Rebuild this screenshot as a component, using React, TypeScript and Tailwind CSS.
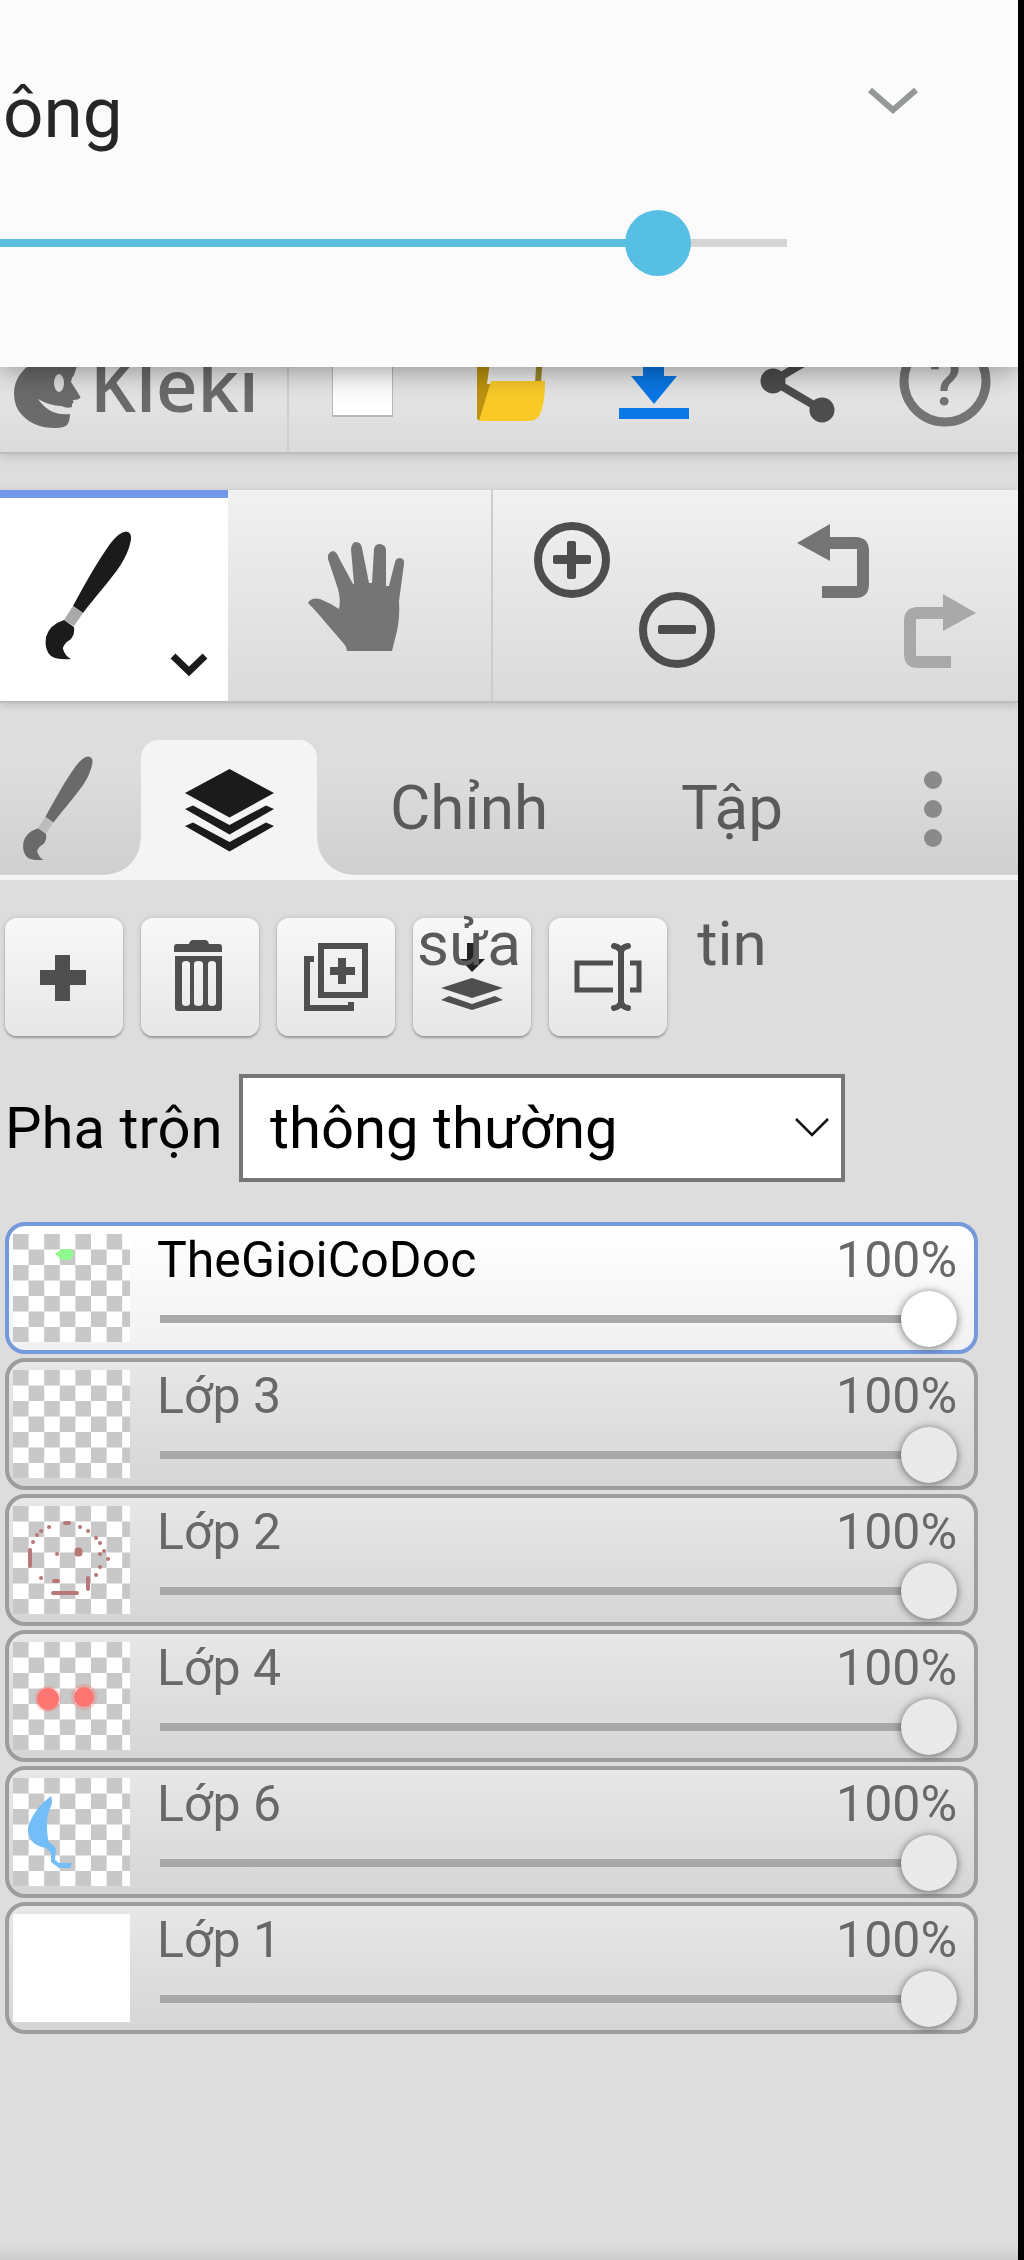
import React, { useState } from "react";

type IconProps = { className?: string };

function Brush({ className, ferrule }: { className: string; ferrule: string }) {
  return (
    <svg viewBox="0 0 90 130" className={className} fill="currentColor" aria-hidden="true">
      <path d="M30 76C42 54 54 32 67 14Q76 2 83 1.500Q89 2 88 10C86 20 82 28 77 36C66 52 52 67 40 83Z" />
      <path d="M30 76L40 83L31 96L21 90Z" fill={ferrule} />
      <path d="M21 90L31 97Q32 104 28 109Q20 114 20 119Q22 126 28 129Q14 130 8 126Q1 120 3 107Q6 95 21 90Z" />
    </svg>
  );
}

function KlekiLogo() {
  return (
    <svg viewBox="0 0 90 108" className="h-[108px] w-[90px] shrink-0" aria-hidden="true">
      <path
        fill="#6b6b6b"
        d="M40 14Q14 28 14 49Q14 63 22 71Q34 84 55 84Q64 84 67 81Q70 77 70 70Q60 71 53 68Q44 64 38 55Q50 62 61 62Q68 65 72 63L72 60L74 58Q72 57 73 56Q80 56 80.500 53L71 38Q71 34 74 31L77 22L77 12Z"
      />
      <ellipse cx="59" cy="39" rx="5" ry="9" fill="#dedede" />
    </svg>
  );
}

function NewImageIcon() {
  return (
    <svg viewBox="0 0 96 96" className="size-24" aria-hidden="true">
      <rect x="18" y="0" width="61" height="67" fill="#999" opacity="0.6" />
      <rect x="19" y="0" width="59" height="65" fill="#fff" />
    </svg>
  );
}

function FolderIcon() {
  return (
    <svg viewBox="0 0 96 96" className="size-24" aria-hidden="true">
      <path d="M17 4H31V32L20 71L17 69Z" fill="#bd9410" />
      <path d="M31 4H74V34H27Z" fill="#f1f1f1" />
      <path d="M77 4H83L81 34H75Z" fill="#a08a2c" />
      <path d="M31 31H85Q85 56 79 66Q76 71 68 71H19Z" fill="#facb28" />
    </svg>
  );
}

function DownloadIcon() {
  return (
    <svg viewBox="0 0 96 96" className="size-24" fill="#0a78e6" aria-hidden="true">
      <path d="M38 0H59V26H72L49 54L26 26H38Z" />
      <path d="M14 58H84V69H14Z" />
    </svg>
  );
}

function ShareIcon() {
  return (
    <svg viewBox="0 0 96 96" className="size-24" fill="#4d4d4d" aria-hidden="true">
      <path d="M71 2L22 31L71 60" fill="none" stroke="#4d4d4d" strokeWidth="8" />
      <circle cx="22" cy="31" r="12.500" />
      <circle cx="71" cy="60" r="12.500" />
      <circle cx="71" cy="2" r="12.500" />
    </svg>
  );
}

function HelpIcon() {
  return (
    <svg viewBox="0 0 96 96" className="size-24" aria-hidden="true">
      <circle cx="48" cy="31" r="41" fill="none" stroke="#747474" strokeWidth="9" />
      <text x="48" y="55" textAnchor="middle" fontFamily="Roboto, sans-serif" fontWeight="500" fontSize="66" fill="#747474">
        ?
      </text>
    </svg>
  );
}

function Hand() {
  return (
    <svg viewBox="0 0 97 112" className="h-[112px] w-[97px]" fill="#757575" aria-hidden="true">
      <path d="M0 62Q3 56 12 58Q22 62 31 68Q33 60 30 48L20 18Q19 11 25 10Q29 11 31 17L45 43H46L43 8Q44 1 48 1Q53 1 54 7L61 42H64L66 8Q67 3 72 3Q78 4 78 9V45H81L87 21Q88 17 92 17Q97 18 96 23L91 60Q92 76 89 90L84 110H39Q39 106 36 103L12 75Q8 70 0 62Z" />
    </svg>
  );
}

function ZoomIcon({ plus }: { plus: boolean }) {
  return (
    <svg viewBox="0 0 76 76" className="size-[76px]" aria-hidden="true">
      <circle cx="38" cy="38" r="34" fill="none" stroke="#4d4d4d" strokeWidth="8" />
      <rect x="19" y="33" width="38" height="9" rx="2" fill="#4d4d4d" />
      {plus && <rect x="33" y="19" width="9" height="38" rx="2" fill="#4d4d4d" />}
    </svg>
  );
}

function TurnArrow({ className }: IconProps) {
  return (
    <svg viewBox="0 0 72 76" className={className} fill="currentColor" aria-hidden="true">
      <path d="M0 20L33 1V14H58Q72 14 72 28V61Q72 75 58 75H25V63H60V26H33V38Z" />
    </svg>
  );
}

function LayersIcon() {
  return (
    <svg viewBox="0 0 89 83" className="h-[83px] w-[89px]" fill="#1b1b1b" aria-hidden="true">
      <path d="M44.500 0L89 24L44.500 48.500L0 24Z" />
      <path d="M0 40L8 36.500L44.500 56L81 36.500L89 40L44.500 65.500Z" />
      <path d="M0 57L8 53.500L44.500 73L81 53.500L89 57L44.500 82.500Z" />
    </svg>
  );
}

const actions = [
  {
    label: "Thêm lớp",
    icon: <path d="M50 37H65V52H81V67H65V83H50V67H35V52H50Z" />,
  },
  {
    label: "Xóa lớp",
    icon: (
      <>
        <path d="M36 26H48Q49 22 52 22H64Q67 22 68 26H78Q81 26 81 29V34H33V29Q33 26 36 26Z" />
        <path
          fillRule="evenodd"
          d="M34 38H81V90Q81 93 78 93H37Q34 93 34 90ZM41 46V85Q41 88 45 88Q49 88 49 85V46Q49 43 45 43Q41 43 41 46ZM53 46V85Q53 88 57.500 88Q62 88 62 85V46Q62 43 57.500 43Q53 43 53 46ZM67 46V85Q67 88 71 88Q75 88 75 85V46Q75 43 71 43Q67 43 67 46Z"
        />
      </>
    ),
  },
  {
    label: "Nhân đôi lớp",
    icon: (
      <>
        <rect x="44" y="28" width="44" height="49" fill="none" stroke="#4f4f4f" strokeWidth="6" />
        <path d="M61 40H69V49H78V57H69V66H61V57H53V49H61Z" />
        <path d="M27 38H37V44H33V87H71V84H77V93H27Z" />
      </>
    ),
  },
  {
    label: "Hợp nhất lớp",
    icon: (
      <>
        <path d="M54 25H64V41H72L59 54L47 41H54Z" fill="#222" />
        <path d="M28 70L59 60L90 70L59 80Z" />
        <path d="M28 82L36 78L59 86L82 78L90 82L59 92Z" />
      </>
    ),
  },
  {
    label: "Đổi tên lớp",
    icon: (
      <g fill="none" stroke="#4f4f4f">
        <path d="M64 45H28V72H64M81 45H90V72H81" strokeWidth="5" />
        <path d="M65 28Q71 29 72 34Q73 29 79 28M65 90Q71 89 72 84Q73 89 79 90M72 32V86" strokeWidth="6" strokeLinecap="round" />
      </g>
    ),
  },
];

type Layer = { name: string; drawing?: React.ReactNode; plain?: boolean };

const layers: Layer[] = [
  { name: "TheGioiCoDoc", drawing: <path d="M42 20L49 15H58L61 20L57 26H49Z" fill="#90f88e" /> },
  { name: "Lớp 3" },
  {
    name: "Lớp 2",
    drawing: (
      <g fill="none" stroke="#b87878" strokeLinecap="round" strokeWidth="4">
        <path d="M52 17H56M17 44V60M40 87H64M41 75H45M75 72V83" />
        <path d="M65 45h1M65 47h1" strokeWidth="7" />
        <path d="M36 21h.1M28 25h.1M24 29h.1M20 36h.1M67 21h.1M75 25h.1M83 32h.1M87 37h.1M91 45h.1M87 48h.1M95 53h.1M87 61h.1M83 69h.1M44 48h.1M28 72h.1" />
      </g>
    ),
  },
  {
    name: "Lớp 4",
    drawing: (
      <g fill="#ff7571">
        <circle cx="35" cy="57" r="13" opacity="0.3" />
        <circle cx="35" cy="57" r="11" />
        <circle cx="71" cy="55" r="13" opacity="0.3" />
        <circle cx="71" cy="55" r="10" />
      </g>
    ),
  },
  {
    name: "Lớp 6",
    drawing: (
      <path
        d="M38 18Q40 24 38 28Q34 36 34 46Q34 60 36 64L43 70L42 82L46 85H59L57 90H46L38 84V75L33 70Q22 68 18 62Q13 54 16 46Q22 30 38 18Z"
        fill="#73bdf8"
      />
    ),
  },
  { name: "Lớp 1", plain: true },
];

function LayerRow({ layer, active, onSelect }: { layer: Layer; active: boolean; onSelect: () => void }) {
  const [opacity, setOpacity] = useState(100);
  return (
    <li
      onClick={onSelect}
      className={
        "flex h-[132px] rounded-[20px] border-4 pr-[17px] " +
        (active
          ? "border-[#7499dc] bg-linear-to-b from-white to-[#f1f1f1]"
          : "border-[#9d9d9d] bg-linear-to-b from-[#e7e7e7] to-[#d6d6d6]")
      }
    >
      <svg viewBox="0 0 117 108" className="mt-2 ml-1 h-[108px] w-[117px] shrink-0" aria-hidden="true">
        <rect width="117" height="108" fill="#fff" />
        {!layer.plain &&
          Array.from({ length: 28 }, (_, i) => {
            const row = Math.floor(i / 4);
            const x = ((i % 4) * 2 + (row % 2)) * 15.6;
            return (
              <rect key={i} x={x} y={row * 15.5} width={15.6} height={15.5} fill="#c8c8c8" />
            );
          })}
        {layer.drawing}
      </svg>
      <div className="ml-[27px] min-w-0 flex-1 pt-[6px]">
        <div className="flex justify-between text-[50px] leading-14 text-[#686868]">
          <span className={active ? "text-black" : ""}>{layer.name}</span>
          <span>{opacity}%</span>
        </div>
        <input
          type="range"
          min={0}
          max={100}
          value={opacity}
          onChange={(e) => setOpacity(Number(e.target.value))}
          aria-label={"Độ mờ " + layer.name}
          className={
            "mt-[3px] block h-14 w-full appearance-none bg-transparent pl-[3px] [&::-webkit-slider-runnable-track]:h-2 [&::-webkit-slider-runnable-track]:bg-[#a8a8a8] [&::-webkit-slider-thumb]:-mt-6 [&::-webkit-slider-thumb]:size-14 [&::-webkit-slider-thumb]:appearance-none [&::-webkit-slider-thumb]:rounded-full [&::-webkit-slider-thumb]:shadow-[0_1px_8px_rgba(0,0,0,0.55)] " +
            (active ? "[&::-webkit-slider-thumb]:bg-white" : "[&::-webkit-slider-thumb]:bg-[#e9e9e9]")
          }
        />
      </div>
    </li>
  );
}

export default function App() {
  const [selected, setSelected] = useState(0);
  return (
    <main className="flex min-h-screen flex-col overflow-hidden border-r-[6px] border-black bg-[#dddddd] font-[Roboto,sans-serif]">
      <section className="relative z-10 h-[367px] bg-[#fbfbfb] shadow-[0_2px_30px_rgba(0,0,0,0.45)]">
        <div className="flex items-start justify-between pt-[70px] pr-[100px]">
          <h1 className="pl-[3px] text-[71px] leading-[86px] text-[#262626]">ông</h1>
          <button aria-label="Thu gọn" className="mt-4">
            <svg viewBox="0 0 50 30" className="h-[30px] w-[50px]" aria-hidden="true">
              <path d="M2 4L25 24L48 4" fill="none" stroke="#959899" strokeWidth="6" />
            </svg>
          </button>
        </div>
        <div className="mt-[54px] flex pr-[231px]">
          <input
            type="range"
            aria-label="Cỡ"
            min={0}
            max={1000}
            defaultValue={867}
            className="block h-[66px] flex-1 appearance-none bg-transparent [&::-webkit-slider-runnable-track]:h-2 [&::-webkit-slider-runnable-track]:bg-[linear-gradient(90deg,#5bc0e0_84%,#d5d5d5_84%)] [&::-webkit-slider-thumb]:-mt-[29px] [&::-webkit-slider-thumb]:size-[66px] [&::-webkit-slider-thumb]:appearance-none [&::-webkit-slider-thumb]:rounded-full [&::-webkit-slider-thumb]:bg-[#56bfe3]"
          />
        </div>
      </section>

      <header className="relative z-1 -mt-[23px] flex h-[110px] border-b-2 border-[#bcbcbc] bg-linear-to-b from-[#eeeeee] to-[#dadada] shadow-[0_2px_10px_rgba(0,0,0,0.15)]">
        <a href="#kleki" className="flex w-[289px] shrink-0 border-r-2 border-[#cfcfcf]">
          <KlekiLogo />
          <span className="font-['Open_Sans',sans-serif] text-[72px] leading-20 font-semibold text-[#6b6b6b]">Kleki</span>
        </a>
        <nav className="grid flex-1 grid-cols-5 place-items-center">
          <button aria-label="Ảnh mới"><NewImageIcon /></button>
          <button aria-label="Mở"><FolderIcon /></button>
          <button aria-label="Lưu"><DownloadIcon /></button>
          <button aria-label="Chia sẻ"><ShareIcon /></button>
          <button aria-label="Trợ giúp"><HelpIcon /></button>
        </nav>
      </header>

      <div className="relative mt-9 flex h-[213px] border-b-2 border-[#bdbdbd] bg-linear-to-b from-[#f1f1f1] to-[#dadada] shadow-[0_2px_8px_rgba(0,0,0,0.15)]">
        <button aria-label="Cọ" className="flex w-[228px] items-start border-t-8 border-[#7398ea] bg-white pt-8 pl-[43px] text-[#1b1b1b]">
          <Brush className="h-[130px] w-[90px]" ferrule="#a9a9a9" />
          <svg viewBox="0 0 38 24" className="mt-[123px] ml-[37px] h-6 w-[38px]" aria-hidden="true">
            <path d="M3 3L19 18.500L35 3" fill="none" stroke="#1b1b1b" strokeWidth="7" />
          </svg>
        </button>
        <button aria-label="Bàn tay" className="flex w-[265px] items-start border-r-2 border-[#cccccc] pt-[51px] pl-20">
          <Hand />
        </button>
        <div className="grid flex-1 grid-cols-2">
          <div className="flex items-start gap-[29px] pl-[41px]">
            <button aria-label="Phóng to" className="mt-8"><ZoomIcon plus /></button>
            <button aria-label="Thu nhỏ" className="mt-[102px]"><ZoomIcon plus={false} /></button>
          </div>
          <div className="flex items-start gap-[35px] pl-[41px]">
            <button aria-label="Hoàn tác" className="mt-[33px] text-[#747474]">
              <TurnArrow className="h-[76px] w-[72px]" />
            </button>
            <button aria-label="Làm lại" className="mt-[103px] text-[#a9a9a9]">
              <TurnArrow className="h-[76px] w-[72px] -scale-x-100" />
            </button>
          </div>
        </div>
      </div>

      <div role="tablist" className="flex h-[177px] items-start border-b-[5px] border-[#f4f4f4] bg-linear-to-b from-[#dddddd] from-40% to-[#cfcfcf] pt-[37px] text-[62px] leading-[136px] text-[#5a5a5a]">
        <button role="tab" aria-label="Cọ" className="flex h-[135px] w-[141px] items-start pt-[15px] pl-[21px] text-[#6a6a6a]">
          <Brush className="h-[106px] w-[73px]" ferrule="#bdbdbd" />
        </button>
        <button role="tab" aria-label="Lớp" aria-selected="true" className="relative flex h-[135px] w-[176px] items-start justify-center rounded-t-[18px] bg-[#f4f4f4] pt-[29px]">
          <LayersIcon />
          <span className="absolute right-full bottom-0 size-9 bg-[radial-gradient(circle_at_0_0,transparent_35px,#f4f4f4_36px)]" />
          <span className="absolute bottom-0 left-full size-9 bg-[radial-gradient(circle_at_100%_0,transparent_35px,#f4f4f4_36px)]" />
        </button>
        <button role="tab" className="relative z-10 flex h-[135px] w-[304px] items-start px-12">
          <span className="flex-1">Chỉnh sửa</span>
        </button>
        <button role="tab" className="relative z-10 flex h-[135px] w-[222px] items-start px-12">
          <span className="flex-1">Tập tin</span>
        </button>
        <button role="tab" aria-label="Thêm" className="flex h-[135px] flex-1 items-start justify-center pt-[30px] pl-1">
          <svg viewBox="0 0 18 78" className="h-[78px] w-[18px]" fill="#8a8a8a" aria-hidden="true">
            <circle cx="9" cy="10" r="9" />
            <circle cx="9" cy="39" r="9" />
            <circle cx="9" cy="68" r="9" />
          </svg>
        </button>
      </div>

      <div className="mt-[38px] flex gap-[18px] px-[5px]">
        {actions.map((a) => (
          <button
            key={a.label}
            aria-label={a.label}
            className="size-[118px] rounded-xl bg-linear-to-b from-[#f8f8f8] to-[#e6e6e6] shadow-[0_2px_2px_rgba(0,0,0,0.25),0_0_5px_rgba(0,0,0,0.15)]"
          >
            <svg viewBox="0 0 118 118" className="size-[118px]" fill="#4f4f4f" aria-hidden="true">
              {a.icon}
            </svg>
          </button>
        ))}
      </div>

      <div className="mt-[38px] flex items-center pl-[5px] text-[58px] text-black">
        <label htmlFor="blend" className="w-[234px] shrink-0 whitespace-nowrap">Pha trộn</label>
        <div className="relative w-[606px]">
          <select id="blend" className="block h-[108px] w-full appearance-none border-4 border-[#777777] bg-white pl-[27px]">
            <option>thông thường</option>
          </select>
          <svg viewBox="0 0 34 20" className="pointer-events-none absolute top-11 right-4 h-5 w-[34px]" aria-hidden="true">
            <path d="M1 1L17 17L33 1" fill="none" stroke="#111" strokeWidth="2.500" />
          </svg>
        </div>
      </div>

      <ul className="mt-10 mr-10 ml-[5px] flex flex-col gap-1">
        {layers.map((layer, i) => (
          <LayerRow key={layer.name} layer={layer} active={i === selected} onSelect={() => setSelected(i)} />
        ))}
      </ul>

      <div className="mt-auto h-4 bg-linear-to-b from-[#dddddd] to-[#cccccc]" />
    </main>
  );
}
